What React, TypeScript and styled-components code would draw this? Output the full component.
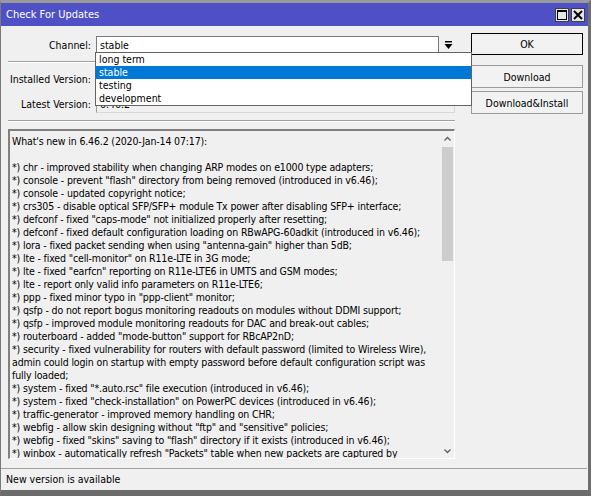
import React from "react";
import styled, { createGlobalStyle } from "styled-components";

const GlobalStyle = createGlobalStyle`
  html, body {
    margin: 0;
    padding: 0;
    background: #f0f0f0;
  }
  body {
    font-family: "DejaVu Sans Condensed", "Liberation Sans", Arial, sans-serif;
    font-size: 10.5px;
    color: #000;
  }
`;

const notes: string[] = [
  "What's new in 6.46.2 (2020-Jan-14 07:17):",
  "",
  '*) chr - improved stability when changing ARP modes on e1000 type adapters;',
  '*) console - prevent "flash" directory from being removed (introduced in v6.46);',
  "*) console - updated copyright notice;",
  "*) crs305 - disable optical SFP/SFP+ module Tx power after disabling SFP+ interface;",
  '*) defconf - fixed "caps-mode" not initialized properly after resetting;',
  "*) defconf - fixed default configuration loading on RBwAPG-60adkit (introduced in v6.46);",
  '*) lora - fixed packet sending when using "antenna-gain" higher than 5dB;',
  '*) lte - fixed "cell-monitor" on R11e-LTE in 3G mode;',
  '*) lte - fixed "earfcn" reporting on R11e-LTE6 in UMTS and GSM modes;',
  "*) lte - report only valid info parameters on R11e-LTE6;",
  '*) ppp - fixed minor typo in "ppp-client" monitor;',
  "*) qsfp - do not report bogus monitoring readouts on modules without DDMI support;",
  "*) qsfp - improved module monitoring readouts for DAC and break-out cables;",
  '*) routerboard - added "mode-button" support for RBcAP2nD;',
  "*) security - fixed vulnerability for routers with default password (limited to Wireless Wire),",
  "admin could login on startup with empty password before default configuration script was",
  "fully loaded;",
  '*) system - fixed "*.auto.rsc" file execution (introduced in v6.46);',
  '*) system - fixed "check-installation" on PowerPC devices (introduced in v6.46);',
  "*) traffic-generator - improved memory handling on CHR;",
  '*) webfig - allow skin designing without "ftp" and "sensitive" policies;',
  '*) webfig - fixed "skins" saving to "flash" directory if it exists (introduced in v6.46);',
  '*) winbox - automatically refresh "Packets" table when new packets are captured by',
];

const channels = ["long term", "stable", "testing", "development"];

const App: React.FC = () => {
  return (
    <>
      <GlobalStyle />
      <Window>
        <TitleBar>
          <Title>Check For Updates</Title>
          <TitleButtons>
            <TitleButton>
              <svg width="10" height="10" viewBox="0 0 10 10">
                <rect x="0.5" y="0.5" width="9" height="9" fill="none" stroke="#000" />
                <rect x="0" y="0" width="10" height="2" fill="#000" />
              </svg>
            </TitleButton>
            <TitleButton>
              <svg width="10" height="10" viewBox="0 0 10 10">
                <path d="M1 1 L9 9 M9 1 L1 9" stroke="#000" strokeWidth="2" />
              </svg>
            </TitleButton>
          </TitleButtons>
        </TitleBar>

        <Body>
          <TopArea>
            <Form>
              <FieldRow>
                <Label>Channel:</Label>
                <SelectWrap>
                  <SelectBox>stable</SelectBox>
                  <ArrowButton>
                    <svg width="9" height="9" viewBox="0 0 9 9">
                      <rect x="1" y="0" width="7" height="1.5" fill="#000" />
                      <path d="M0.5 3 H8.5 L4.5 8 Z" fill="#000" />
                    </svg>
                  </ArrowButton>
                  <DropList>
                    {channels.map((c) => (
                      <DropItem key={c} $active={c === "stable"}>
                        {c}
                      </DropItem>
                    ))}
                  </DropList>
                </SelectWrap>
              </FieldRow>
              <Separator />
              <FieldRow>
                <Label>Installed Version:</Label>
                <ReadField>6.46.1</ReadField>
              </FieldRow>
              <FieldRow>
                <Label>Latest Version:</Label>
                <ReadField>6.46.2</ReadField>
              </FieldRow>
              <Separator />
            </Form>

            <Buttons>
              <Button $default>OK</Button>
              <Button>Download</Button>
              <Button>Download&amp;Install</Button>
            </Buttons>
          </TopArea>

          <Notes>
            <NotesText>
              {notes.map((line, i) => (
                <NoteLine key={i}>{line || "\u00a0"}</NoteLine>
              ))}
            </NotesText>
            <ScrollBar>
              <ScrollArrow>
                <svg width="7" height="5" viewBox="0 0 7 5">
                  <path d="M0.5 4.5 L3.5 1.5 L6.5 4.5" fill="none" stroke="#606060" strokeWidth="1.3" />
                </svg>
              </ScrollArrow>
              <Track>
                <Thumb />
              </Track>
              <ScrollArrow>
                <svg width="7" height="5" viewBox="0 0 7 5">
                  <path d="M0.5 0.5 L3.5 3.5 L6.5 0.5" fill="none" stroke="#606060" strokeWidth="1.3" />
                </svg>
              </ScrollArrow>
            </ScrollBar>
          </Notes>
        </Body>

        <StatusBar>New version is available</StatusBar>
      </Window>
    </>
  );
};

const Window = styled.div`
  width: 591px;
  height: 496px;
  box-sizing: border-box;
  display: flex;
  flex-direction: column;
  background: #f0f0f0;
  border-top: 3px solid #9a9a9a;
  border-left: 1px solid #7a7a7a;
  border-right: 3px solid #6e6e6e;
  border-bottom: 6px solid #6b6b6b;
  overflow: hidden;
`;

const TitleBar = styled.div`
  height: 23px;
  flex: none;
  display: flex;
  align-items: center;
  justify-content: space-between;
  background: #5050c6;
  padding: 0 3px 0 5px;
`;

const Title = styled.div`
  color: #fff;
  font-size: 11px;
`;

const TitleButtons = styled.div`
  display: flex;
  gap: 2px;
`;

const TitleButton = styled.div`
  width: 14px;
  height: 14px;
  box-sizing: border-box;
  background: #e6e6e6;
  border: 1px solid #404040;
  display: flex;
  align-items: center;
  justify-content: center;
`;

const Body = styled.div`
  flex: 1;
  display: flex;
  flex-direction: column;
  padding: 7px 4px 0 7px;
  min-height: 0;
`;

const TopArea = styled.div`
  display: flex;
  gap: 16px;
`;

const Form = styled.div`
  width: 447px;
  display: flex;
  flex-direction: column;
`;

const FieldRow = styled.div`
  display: flex;
  align-items: center;
  height: 18px;
  margin: 3px 0 4px;
`;

const Label = styled.div`
  width: 88px;
  box-sizing: border-box;
  text-align: right;
  padding-right: 5px;
  flex: none;
  white-space: nowrap;
`;

const SelectWrap = styled.div`
  position: relative;
  flex: 1;
  display: flex;
  gap: 2px;
  height: 18px;
`;

const SelectBox = styled.div`
  flex: 1;
  background: #fff;
  border: 1px solid #7a7a7a;
  padding: 0 3px;
  line-height: 16px;
`;

const ArrowButton = styled.div`
  width: 14px;
  display: flex;
  align-items: center;
  justify-content: center;
`;

const DropList = styled.div`
  position: absolute;
  left: -1px;
  top: 16px;
  width: 375px;
  background: #fff;
  border: 1px solid #646464;
  z-index: 5;
`;

const DropItem = styled.div<{ $active?: boolean }>`
  height: 13px;
  line-height: 13px;
  padding-left: 3px;
  background: ${(p) => (p.$active ? "#0078d7" : "#fff")};
  color: ${(p) => (p.$active ? "#fff" : "#000")};
`;

const ReadField = styled.div`
  flex: 1;
  height: 17px;
  box-sizing: border-box;
  border: 1px solid #a0a0a0;
  border-right-color: #d8d8d8;
  border-bottom-color: #d8d8d8;
  padding: 0 3px;
  line-height: 15px;
`;

const Separator = styled.div`
  height: 0;
  border-top: 1px solid #a0a0a0;
  border-bottom: 1px solid #ffffff;
  margin: 3px 0 4px;
`;

const Buttons = styled.div`
  display: flex;
  flex-direction: column;
  gap: 3px;
  width: 112px;
`;

const Button = styled.div<{ $default?: boolean }>`
  height: ${(p) => (p.$default ? "22px" : "23px")};
  box-sizing: border-box;
  display: flex;
  align-items: center;
  justify-content: center;
  background: #f2f2f2;
  border: 1px solid ${(p) => (p.$default ? "#000" : "#9a9a9a")};
  margin-bottom: ${(p) => (p.$default ? "7px" : "0")};
`;

const Notes = styled.div`
  width: 447px;
  height: 330px;
  box-sizing: border-box;
  margin-top: 3px;
  display: flex;
  border: 1px solid #a0a0a0;
  border-top: 2px solid #808080;
  border-left: 2px solid #808080;
  border-right-color: #ffffff;
  border-bottom-color: #ffffff;
`;

const NotesText = styled.div`
  flex: 1;
  padding: 4px 2px;
  overflow: hidden;
  letter-spacing: -0.15px;
`;

const NoteLine = styled.div`
  height: 13px;
  line-height: 13px;
  white-space: nowrap;
`;

const ScrollBar = styled.div`
  width: 13px;
  display: flex;
  flex-direction: column;
  background: #f0f0f0;
`;

const ScrollArrow = styled.div`
  height: 14px;
  display: flex;
  align-items: center;
  justify-content: center;
`;

const Track = styled.div`
  flex: 1;
  padding: 2px 1px;
`;

const Thumb = styled.div`
  height: 114px;
  background: #cdcdcd;
`;

const StatusBar = styled.div`
  height: 22px;
  flex: none;
  box-sizing: border-box;
  margin-right: 1px;
  border-top: 1px solid #a0a0a0;
  padding-left: 5px;
  line-height: 20px;
`;

export default App;
